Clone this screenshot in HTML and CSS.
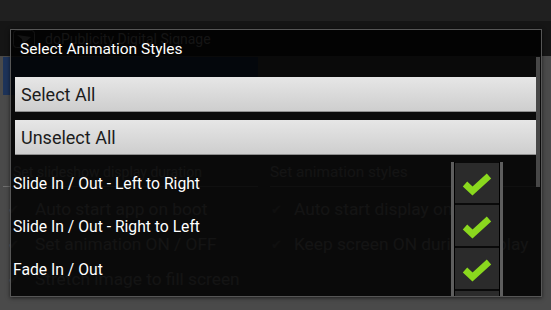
FILE: index.html
```html
<!DOCTYPE html>
<html>
<head>
<meta charset="utf-8">
<link rel="stylesheet" href="styles.css">
</head>
<body>
<div class="screen">
  <div class="statusbar"></div>
  <div class="app">
    <header class="actionbar">
      <svg class="app-icon" width="22" height="18" viewBox="0 0 22 18">
        <rect x="0.5" y="0.5" width="21" height="17" rx="3" fill="none" stroke="#8a8a8a"/>
        <path d="M4 5 L18 7 L10 14 L9 9 Z" fill="#8a8a8a"/>
      </svg>
      <span class="app-title">doPublicity Digital Signage</span>
    </header>
    <main class="prefs">
      <section class="col col-left">
        <div class="tab"></div>
        <div class="pref-head">Set slideshow display duration</div>
        <div class="pref-check first"><span class="bg-cb">✔</span>Auto start app on boot</div>
        <div class="pref-check"><span class="bg-cb">✔</span>Set animation ON / OFF</div>
        <div class="pref-check"><span class="bg-cb">✔</span>Stretch image to fill screen</div>
      </section>
      <section class="col col-right">
        <div class="pref-head">Set animation styles</div>
        <div class="pref-check first"><span class="bg-cb">✔</span>Auto start display on start</div>
        <div class="pref-check"><span class="bg-cb">✔</span>Keep screen ON during display</div>
      </section>
    </main>
  </div>

  <div class="dialog">
    <div class="dialog-title">Select Animation Styles</div>
    <div class="dialog-buttons">
      <button class="btn">Select All</button>
      <button class="btn">Unselect All</button>
    </div>
    <ul class="list">
      <li class="row"><span class="row-label">Slide In / Out - Left to Right</span><span class="cb"><svg width="30" height="24" viewBox="0 0 30 24"><path d="M3 12 L10.5 19 L27 4" class="tick"/></svg></span></li>
      <li class="row"><span class="row-label">Slide In / Out - Right to Left</span><span class="cb"><svg width="30" height="24" viewBox="0 0 30 24"><path d="M3 12 L10.5 19 L27 4" class="tick"/></svg></span></li>
      <li class="row"><span class="row-label">Fade In / Out</span><span class="cb"><svg width="30" height="24" viewBox="0 0 30 24"><path d="M3 12 L10.5 19 L27 4" class="tick"/></svg></span></li>
      <li class="row"><span class="row-label"></span><span class="cb"></span></li>
    </ul>
    <div class="scrollbar"></div>
  </div>
</div>
</body>
</html>
```
FILE: styles.css
```css
html, body {
  margin: 0;
  padding: 0;
  background: #4a4a4a;
}
.screen {
  position: relative;
  width: 551px;
  height: 310px;
  overflow: hidden;
  background: #4a4a4a;
  font-family: Roboto, "Noto Sans", sans-serif;
}
.statusbar {
  height: 21px;
  background: #202020;
}
.actionbar {
  height: 35px;
  background: #151515;
  display: flex;
  align-items: center;
  gap: 10px;
  padding-left: 13px;
}
.app-icon {
  margin-top: 1px;
}
.app-title {
  color: #909090;
  font-size: 14px;
}
.prefs {
  display: grid;
  grid-template-columns: 263px 1fr;
}
.col-left {
  padding: 1px 5px 0 3px;
}
.col-right {
  padding: 102px 12px 0 7px;
}
.tab {
  height: 38px;
  background: #1d3359;
}
.pref-head {
  height: 28px;
  line-height: 28px;
  color: #8c8c8c;
  border-bottom: 1px solid #707070;
  white-space: nowrap;
}
.col-left .pref-head {
  margin-top: 63px;
  padding-left: 10px;
  font-size: 14px;
}
.col-right .pref-head {
  font-size: 15.3px;
}
.pref-check.first {
  margin-top: 5px;
}
.pref-check {
  height: 35px;
  line-height: 35px;
  font-size: 17.3px;
  color: #8c8c8c;
  display: flex;
  align-items: center;
  white-space: nowrap;
}
.bg-cb {
  width: 14px;
  height: 14px;
  font-size: 13px;
  line-height: 14px;
  margin: 0 13px 0 5px;
  color: #6a6a6a;
}
.col-right .bg-cb {
  margin-left: 1px;
  margin-right: 9px;
}

.dialog {
  position: absolute;
  left: 10px;
  top: 29px;
  width: 530px;
  height: 266px;
  border: 1px solid #565656;
  background: rgba(0, 0, 0, 0.86);
  box-shadow: 0 1px 4px rgba(0, 0, 0, 0.6);
  overflow: hidden;
}
.dialog-title {
  box-sizing: border-box;
  height: 47px;
  padding: 9px 9px 0;
  line-height: 20px;
  font-size: 15.5px;
  color: #ffffff;
}
.dialog-buttons {
  display: flex;
  flex-direction: column;
  gap: 8px;
  padding: 0 5px 0 4px;
}
.btn {
  height: 35px;
  border: none;
  border-bottom: 1px solid #8e8e8e;
  background: linear-gradient(#e6e6e6, #cecece);
  text-align: left;
  padding: 0 0 0 6px;
  font-family: Roboto, "Noto Sans", sans-serif;
  font-size: 18px;
  color: #1c1c1c;
}
.list {
  list-style: none;
  margin: 7px 0 0;
  padding: 0;
}
.row {
  height: 43px;
  display: flex;
  align-items: center;
  padding-left: 2px;
}
.row-label {
  flex: 1;
  color: #ffffff;
  font-size: 15.7px;
}
.cb {
  box-sizing: border-box;
  width: 52px;
  height: 43px;
  margin-right: 38px;
  border-left: 3px solid #5e5e5e;
  border-right: 3px solid #5e5e5e;
  background: #2b2b2b;
  box-shadow: inset 1px 0 #000, inset -1px 0 #000, inset 0 -2px #0a0a0a;
  display: flex;
  align-items: center;
  justify-content: center;
}
.row:first-child .cb {
  box-shadow: inset 1px 0 #000, inset -1px 0 #000, inset 0 -2px #0a0a0a, inset 0 1px #0a0a0a;
}
.tick {
  fill: none;
  stroke: #8ad81e;
  stroke-width: 6.5;
}
.scrollbar {
  position: absolute;
  right: 1px;
  top: 27px;
  width: 4px;
  height: 130px;
  background: #474747;
}
```
